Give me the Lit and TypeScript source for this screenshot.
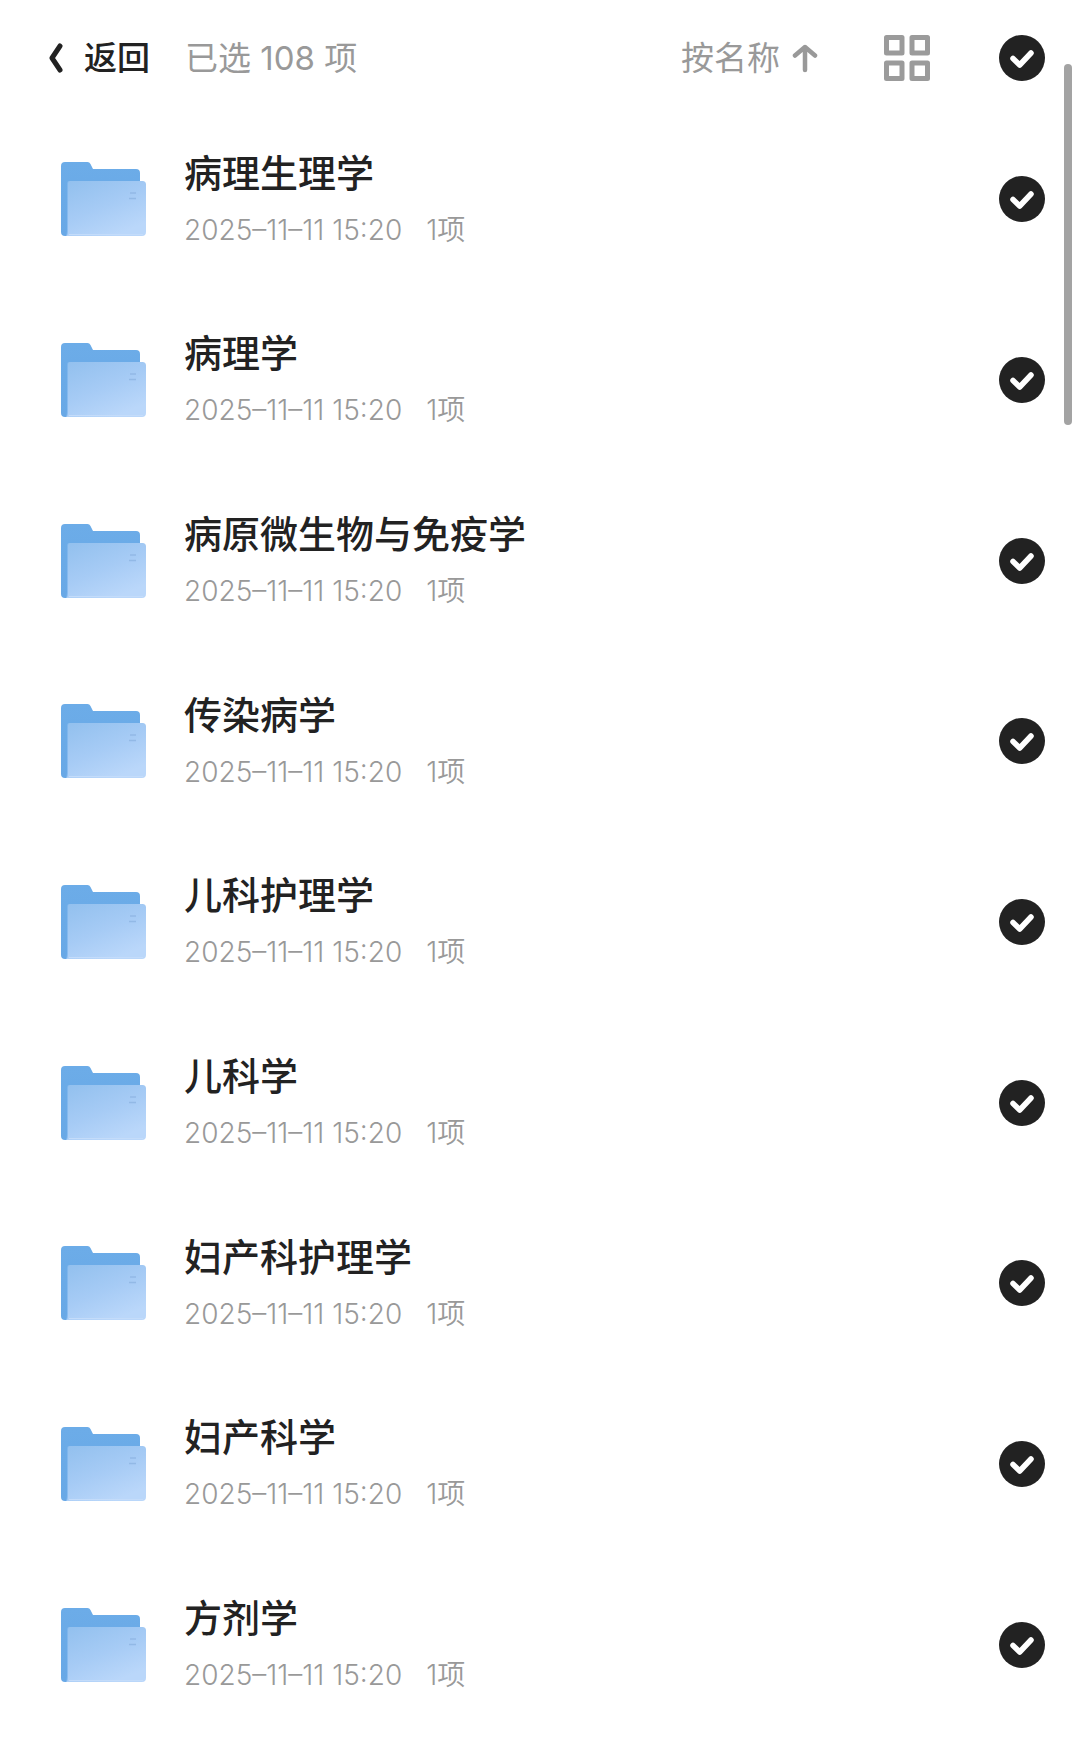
import { LitElement, html, css, svg } from "lit";
import { customElement, property, state } from "lit/decorators.js";

interface Folder {
  name: string;
  date: string;
  count: number;
}

const NAMES = [
  "病理生理学",
  "病理学",
  "病原微生物与免疫学",
  "传染病学",
  "儿科护理学",
  "儿科学",
  "妇产科护理学",
  "妇产科学",
  "方剂学",
];

const FOLDERS: Folder[] = NAMES.map((name) => ({
  name,
  date: "2025–11–11 15:20",
  count: 1,
}));

@customElement("check-mark")
class CheckMark extends LitElement {
  @property({ type: Boolean }) checked = false;
  @property() label = "";

  static styles = css`
    :host {
      display: block;
      flex: none;
    }
    .box {
      display: grid;
      width: 46px;
      height: 46px;
      cursor: pointer;
    }
    .input,
    .tick {
      grid-area: 1 / 1;
      width: 46px;
      height: 46px;
      margin: 0;
    }
    .input {
      appearance: none;
      box-sizing: border-box;
      border: 3px solid #c4c4c4;
      border-radius: 50%;
    }
    .input:checked {
      border: none;
      background: #222;
    }
    .tick {
      pointer-events: none;
      visibility: hidden;
    }
    .input:checked + .tick {
      visibility: visible;
    }
  `;

  private toggle(e: Event) {
    this.checked = (e.target as HTMLInputElement).checked;
    this.dispatchEvent(new CustomEvent("toggle", { detail: this.checked }));
  }

  render() {
    return html`<label class="box">
      <input
        class="input"
        type="checkbox"
        aria-label=${this.label}
        .checked=${this.checked}
        @change=${this.toggle}
      />
      <svg class="tick" viewBox="0 0 46 46" aria-hidden="true">
        <path
          d="M14 23.500 L20.700 30 L32 18"
          fill="none"
          stroke="#fff"
          stroke-width="5.500"
          stroke-linecap="round"
          stroke-linejoin="round"
        />
      </svg>
    </label>`;
  }
}

const folderShape = svg`
  <defs>
    <linearGradient id="back" x1="0" y1="0" x2="0" y2="1">
      <stop offset="0" stop-color="#6cace8" />
      <stop offset="1" stop-color="#68a8e6" />
    </linearGradient>
    <linearGradient id="front" x1="0" y1="0" x2="0.6" y2="1">
      <stop offset="0" stop-color="#92c0ee" />
      <stop offset="0.55" stop-color="#a6cbf5" />
      <stop offset="1" stop-color="#bad7fa" />
    </linearGradient>
    <linearGradient id="side" x1="0" y1="0" x2="0" y2="1">
      <stop offset="0" stop-color="#7db5ec" />
      <stop offset="1" stop-color="#8abcf0" />
    </linearGradient>
  </defs>
  <path fill="url(#back)" d="M4 0H26.5Q28.500 0 29.500 2L32 7H75Q79 7 79 11V66Q79 74 75 74H4Q0 74 0 70V4Q0 0 4 0Z" />
  <path fill="url(#side)" d="M8 19H12V74H5Q6 72 6 68V22Q6 19 8 19Z" />
  <path fill="url(#front)" d="M9 19H81.500Q85 19 85 22.500V70Q85 74 81 74H5.500Q7 73 7 69V21Q7 19 9 19Z" />
  <path stroke="#c4dcfa" stroke-width="1" d="M8 72.500H82" />
  <path stroke="#92b9e6" stroke-width="1.500" d="M69 31H75M68 36.500H75" />
`;

@customElement("folder-row")
class FolderRow extends LitElement {
  @property({ attribute: false }) folder!: Folder;
  @property({ type: Boolean }) checked = false;

  static styles = css`
    :host {
      display: flex;
      align-items: center;
      box-sizing: border-box;
      height: 100%;
      padding: 0 35px 0 61px;
      gap: 38px;
    }
    .icon {
      flex: none;
      width: 85px;
      height: 74px;
    }
    .info {
      flex: 1;
      min-width: 0;
      display: grid;
      gap: 13px;
    }
    .name {
      margin: 0;
      font-size: 38px;
      line-height: 48px;
      font-weight: 500;
      color: #222;
    }
    .meta {
      display: flex;
      gap: 24px;
      margin: 0;
      font-size: 28px;
      line-height: 40px;
      font-weight: 350;
      color: #999;
    }
  `;

  render() {
    const { name, date, count } = this.folder;
    return html`
      <svg class="icon" viewBox="0 0 85 74" aria-hidden="true">${folderShape}</svg>
      <div class="info">
        <h2 class="name">${name}</h2>
        <p class="meta"><span>${date}</span><span>${count}项</span></p>
      </div>
      <check-mark .label=${name} .checked=${this.checked}></check-mark>
    `;
  }
}

@customElement("app-root")
class AppRoot extends LitElement {
  @state() private all = true;

  static styles = css`
    :host {
      display: flex;
      flex-direction: column;
      position: relative;
      min-height: 100vh;
      background: #fff;
      font-family: Inter, "Noto Sans CJK SC", sans-serif;
      color: #222;
    }
    .bar {
      display: flex;
      align-items: center;
      padding: 35px 35px 28px 48px;
      font-size: 33px;
      line-height: 46px;
    }
    .btn {
      display: flex;
      align-items: center;
      padding: 0;
      border: 0;
      background: none;
      font: inherit;
      color: inherit;
      cursor: pointer;
    }
    .back {
      gap: 20px;
      font-weight: 500;
    }
    .chevron {
      width: 16px;
      height: 30px;
    }
    .status {
      flex: 1;
      margin-left: 35px;
      color: #999;
    }
    .sort {
      gap: 12px;
      margin-right: 66px;
      color: #999;
    }
    .arrow {
      width: 26px;
      height: 30px;
    }
    .view {
      margin-right: 69px;
    }
    .grid {
      width: 46px;
      height: 46px;
    }
    .list {
      flex: 1;
      display: grid;
      grid-auto-rows: minmax(140px, 1fr);
      margin: 0;
      padding: 0 0 11px;
      list-style: none;
    }
    .thumb {
      position: absolute;
      top: 64px;
      right: 8px;
      width: 8px;
      height: 361px;
      border-radius: 4px;
      background: #a3a3a3;
    }
  `;

  render() {
    return html`
      <header class="bar">
        <button class="btn back">
          <svg class="chevron" viewBox="0 0 16 30" aria-hidden="true">
            <path d="M12 3L4 15L12 27" fill="none" stroke="#222" stroke-width="5" stroke-linecap="round" stroke-linejoin="round" />
          </svg>
          <span>返回</span>
        </button>
        <span class="status">已选 108 项</span>
        <button class="btn sort">
          <span>按名称</span>
          <svg class="arrow" viewBox="0 0 26 30" aria-hidden="true">
            <path d="M13 27V4M3 12.500L13 4L23 12.500" fill="none" stroke="#999" stroke-width="4.500" stroke-linecap="round" stroke-linejoin="round" />
          </svg>
        </button>
        <button class="btn view" aria-label="网格视图">
          <svg class="grid" viewBox="0 0 46 46" aria-hidden="true">
            <g fill="none" stroke="#9b9b9b" stroke-width="5" stroke-linejoin="round">
              <rect x="2.500" y="2.500" width="15.500" height="15.500" />
              <rect x="28" y="2.500" width="15.500" height="15.500" />
              <rect x="2.500" y="28" width="15.500" height="15.500" />
              <rect x="28" y="28" width="15.500" height="15.500" />
            </g>
          </svg>
        </button>
        <check-mark
          .label=${"全选"}
          .checked=${this.all}
          @toggle=${(e: CustomEvent) => (this.all = e.detail)}
        ></check-mark>
      </header>
      <ul class="list">
        ${FOLDERS.map(
          (f) => html`<li>
            <folder-row .folder=${f} .checked=${this.all}></folder-row>
          </li>`,
        )}
      </ul>
      <div class="thumb"></div>
    `;
  }
}
